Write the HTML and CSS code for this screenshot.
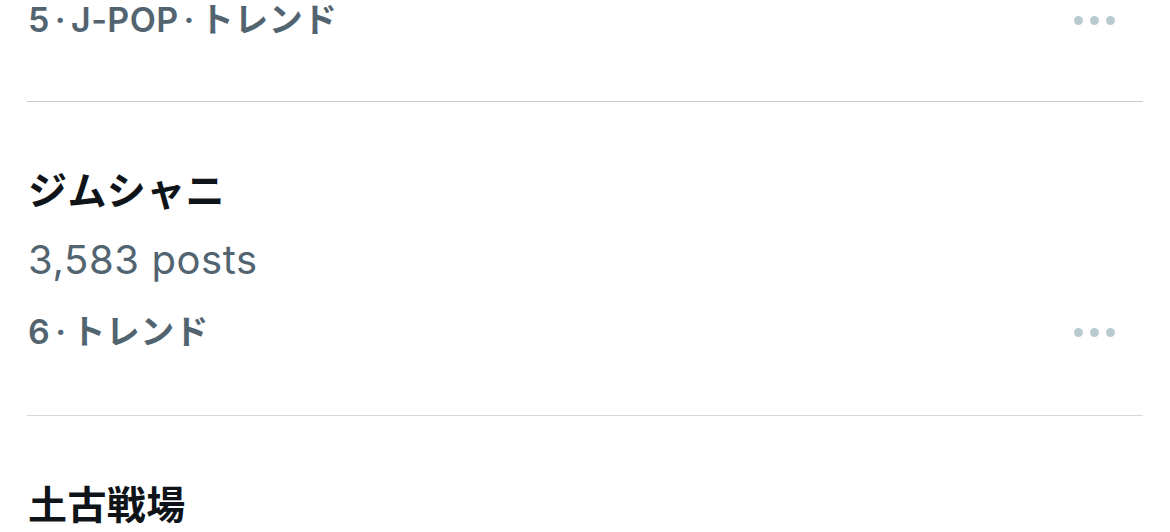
FILE: index.html
```html
<!DOCTYPE html>
<html lang="ja">
<head>
  <meta charset="utf-8">
  <meta name="viewport" content="width=device-width">
  <title>トレンド</title>
  <link rel="stylesheet" href="styles.css">
</head>
<body>
  <div class="trends">
    <div class="trend cut">
      <div class="meta">
        <span>5<span class="sep">·</span>J-POP<span class="sep">·</span>トレンド</span>
        <span class="more"><i></i><i></i><i></i></span>
      </div>
    </div>

    <div class="trend">
      <div class="name">ジムシャニ</div>
      <div class="count">3,583 posts</div>
      <div class="meta">
        <span>6<span class="sep">·</span>トレンド</span>
        <span class="more"><i></i><i></i><i></i></span>
      </div>
    </div>

    <div class="trend">
      <div class="name">土古戦場</div>
    </div>
  </div>
</body>
</html>
```

FILE: styles.css
```css
body { margin: 0; background: #fff; overflow: hidden; font-family: Inter, "Liberation Sans", "Noto Sans CJK JP", sans-serif; }
.trends { padding: 0 27px; }
.trend { padding: 50px 0 47px 1px; border-bottom: 1px solid #cfd9de; }
.trend.cut { margin-top: -16px; padding-top: 0; padding-bottom: 45px; border-bottom-color: #c9cbcd; }
.trend:last-child { border-bottom: 0; }
.name { font-size: 39px; line-height: 72px; font-weight: 700; color: #0f1419; font-family: "Noto Sans CJK JP", sans-serif; letter-spacing: 0.4px; }
.count { font-size: 40px; line-height: 72px; color: #536471; letter-spacing: 0.6px; }
.meta { display: flex; justify-content: space-between; align-items: center; font-size: 34px; line-height: 72px; font-weight: 600; color: #536471; letter-spacing: 0.4px; }
.sep { margin: 0 5px; }
.more { display: flex; gap: 7px; margin-right: 28px; }
.more i { width: 9px; height: 9px; border-radius: 50%; background: #b9cad3; }
```
